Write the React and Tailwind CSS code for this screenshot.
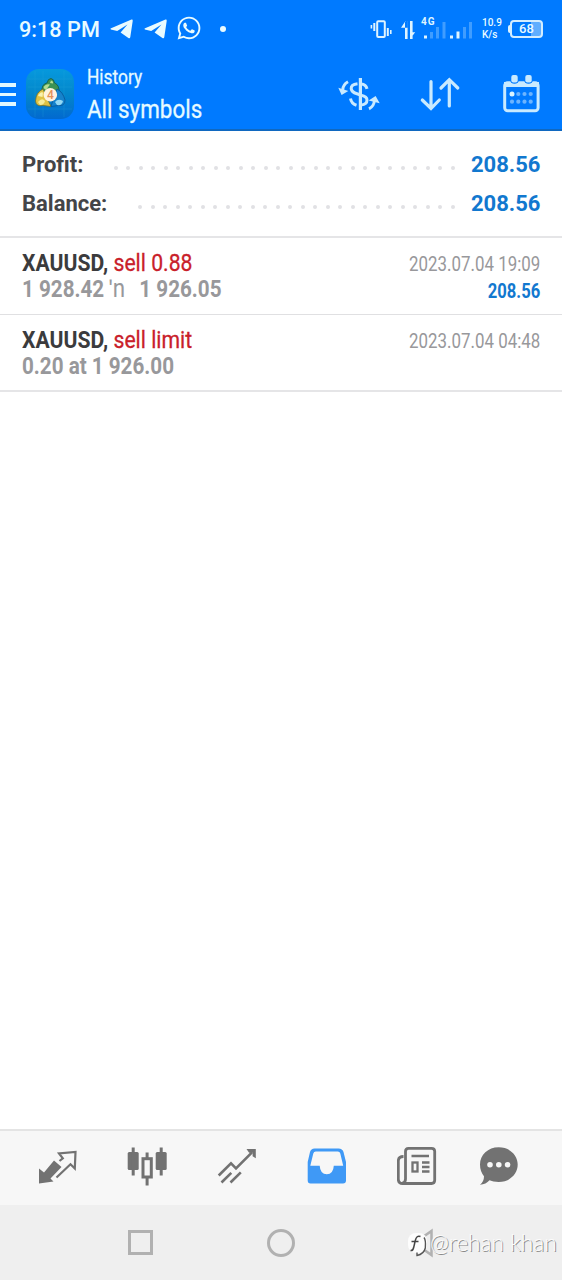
import { FaWhatsapp } from "react-icons/fa";

const deals = [
  {
    symbol: "XAUUSD,",
    side: "sell 0.88",
    detail: (
      <>
        1 928.42 <span className="inline-block w-[25px] -ml-px text-[26px] leading-[20px] font-normal">ʹn</span>
        <span className="pl-[5px]"> 1 926.05</span>
      </>
    ),
    date: "2023.07.04 19:09",
    profit: "208.56",
  },
  {
    symbol: "XAUUSD,",
    side: "sell limit",
    detail: "0.20 at 1 926.00",
    date: "2023.07.04 04:48",
  },
];

function Telegram() {
  return (
    <svg className="w-[23px] h-5" viewBox="0 0 23 20" fill="#e9fbff">
      <path d="M0.5 9.6 21.5 0.6 Q23 0.3 22.7 2 L20.3 18 Q20 19.8 18.4 18.9 L10.6 13.6 17.5 5.6 7.2 12 0.8 10.5Z" />
    </svg>
  );
}

function StatusBar() {
  return (
    <div className="h-[58px] flex items-center pl-[19px] pr-[19px] text-[#e9fbff]">
      <div className="w-[91px] text-[22px] font-medium whitespace-nowrap">
        <span className="inline-block origin-left scale-x-[0.985]">9:18 PM</span>
      </div>
      <Telegram />
      <div className="w-[11px]" />
      <Telegram />
      <FaWhatsapp className="ml-[9px] w-[26px] h-[26px] -mt-[2px]" />
      <div className="ml-[18px] w-[6px] h-[6px] rounded-full bg-[#e9fbff]" />

      <div className="ml-auto flex items-center">
        {/* vibrate, data arrows, signal */}
        <svg className="w-[104px] h-[26px]" viewBox="369 15 104 26" fill="#dff4ff">
          <rect x="377.2" y="20.2" width="7.6" height="15.8" rx="1" fill="none" stroke="#dff4ff" strokeWidth="2" />
          <path d="M373.3 22h2v8h-2zM370.6 24h1.6v3.5h-1.6zM386.8 27h2v8h-2zM390 29h1.6v4h-1.6z" />
          <path d="M405 20v18h2.6V20zM401 26.7 405.5 20h2v6.7zM410 20v18h2.6V20zM410 38l5.2-6.7h-5.2z" />
          <rect x="424" y="34.5" width="3" height="3" />
          <g opacity=".38" fill="#a9d8ff">
            <rect x="430" y="31" width="3" height="6.5" />
            <rect x="436" y="26" width="3" height="11.5" />
            <rect x="442.5" y="21" width="3" height="16.5" />
            <rect x="463" y="26" width="3" height="11.5" />
            <rect x="469" y="21" width="3" height="16.5" />
          </g>
          <rect x="450" y="34.5" width="3" height="3" />
          <rect x="456.5" y="30.5" width="3" height="7" />
          <text x="421" y="24.4" fontSize="10" fontWeight="700" textLength="13.5">4G</text>
        </svg>
        <div className="ml-[9px] w-[20px] text-[10px] leading-[12px] font-medium whitespace-nowrap">
          <div>10.9</div>
          <div>K/s</div>
        </div>
        <div className="ml-[6px] w-[2px] h-[8px] rounded-l bg-[#dff4ff]" />
        <div className="w-[33px] h-[18px] rounded-[4px] border-2 border-[#d3edff] bg-linear-to-r from-[#007aff] from-65% to-[#5faeff] to-65% flex items-center justify-center text-[13px] font-medium">
          68
        </div>
      </div>
    </div>
  );
}

function AppLogo() {
  return (
    <svg className="ml-[10px] w-[48px] h-[50px]" viewBox="0 0 48 50">
      <defs>
        <linearGradient id="tile" x1="0" y1="0" x2="0" y2="1">
          <stop offset="0" stopColor="#0699dd" />
          <stop offset=".5" stopColor="#0387cb" />
          <stop offset="1" stopColor="#0269cf" />
        </linearGradient>
      </defs>
      <rect width="48" height="50" rx="13" fill="url(#tile)" />
      <path d="M9 2V48M17 2V48M38 2V48M2 10H46M2 18H46M2 40H46" stroke="#2aa8dc" strokeWidth=".6" opacity=".4" />
      {/* green, gold and blue figures around the coin */}
      <path d="M16 24Q15 15 21 14Q22 9.5 25 9.5Q28 10 28.5 14Q34 16 33 25L25 20Z" fill="#3c9254" stroke="#135945" strokeWidth=".8" />
      <path d="M17.5 19Q19 14.5 24 15.5L20 21Z" fill="#b5dc90" />
      <path d="M25 11.5Q27.5 12 27 14.5L24 14Z" fill="#b5dc90" />
      <path d="M17 20Q10 23 9.5 32Q10 38 17 36.5L25 37.5L21 29Z" fill="#e0c243" stroke="#6c7131" strokeWidth=".8" />
      <path d="M12 27Q14 22.5 17 23.5L16.5 28Z" fill="#f9f1ae" />
      <path d="M12 33Q16 28 19 32Q18 36 14 36Z" fill="#f7eb97" />
      <path d="M31 20Q37 23 39 31Q39 37.5 32 36.5L25 37.5L28 28Z" fill="#1683cc" stroke="#075497" strokeWidth=".8" />
      <path d="M29 33Q32 29 37 32Q36 37 31 36Z" fill="#93d8f4" />
      <circle cx="24.3" cy="25.8" r="6.8" fill="#fff2de" />
      <text x="24.3" y="30" textAnchor="middle" fontSize="12" fontWeight="500" fill="#e29158">4</text>
    </svg>
  );
}

function Header() {
  return (
    <div className="h-[73px] border-b-2 border-[#1068c0] flex items-center pr-[22px] text-[#e6faff]">
      <div className="flex flex-col gap-[6px] w-4 pt-[2px]">
        <div className="h-[3.5px] bg-[#e2f8ff]" />
        <div className="h-[3.5px] bg-[#e2f8ff]" />
        <div className="h-[3.5px] bg-[#e2f8ff]" />
      </div>
      <AppLogo />
      <div className="ml-[13px] w-[160px] whitespace-nowrap">
        <div className="text-[21px] leading-[30px] origin-left scale-x-[0.825] [-webkit-text-stroke:0.3px]">History</div>
        <div className="text-[26.5px] leading-[34px] origin-left scale-x-[0.845] [-webkit-text-stroke:0.3px]">All symbols</div>
      </div>

      <div className="ml-auto flex items-center">
        <svg className="w-[44px] h-[40px]" viewBox="337 73 44 40" fill="none" stroke="#c9eaff" strokeWidth="3">
          <path d="M360.4 77V109" strokeWidth="3.2" />
          <path d="M357.5 82.7Q351 83.5 351.2 87.5Q351.5 91 357 92.8L361 94.2Q367 95.5 367 99Q367 103.5 361 104" />
          <path d="M361 83Q366 83.5 367 87.8" />
          <path d="M350.5 97.5Q351.3 102.5 356.5 104.2" />
          <path d="M348 80.8Q343 83.5 342.7 89" />
          <path d="M338.3 86.8L348.3 90L341.6 94Z" fill="#c9eaff" stroke="none" />
          <path d="M369 107.8Q374 105.5 374.5 99" />
          <path d="M368.7 99.5L375.6 95L379.7 102.3Z" fill="#c9eaff" stroke="none" />
        </svg>
        <svg className="ml-[38px] w-[42px] h-[40px]" viewBox="419 73 42 40" fill="none" stroke="#c9eaff" strokeWidth="3.2" strokeLinecap="round">
          <path d="M431 80.5V106M422.3 99L431 107.5L439.3 99M449.3 105V79M441 87L449.3 78.7L457.8 87" />
        </svg>
        <svg className="ml-[42px] w-[37px] h-[40px]" viewBox="503 73 37 40">
          <rect x="504.7" y="81.7" width="33.4" height="28" rx="3" fill="none" stroke="#c9eaff" strokeWidth="3" />
          <path d="M504 81h35v5h-35z" fill="#c9eaff" />
          <circle cx="514.5" cy="78" r="4.8" fill="#007aff" />
          <circle cx="528.5" cy="78" r="4.8" fill="#007aff" />
          <rect x="511.3" y="74" width="6.4" height="7.5" rx="2" fill="#c9eaff" />
          <rect x="525.3" y="74" width="6.4" height="7.5" rx="2" fill="#c9eaff" />
          <circle cx="512" cy="93" r="2.5" fill="#d9f4ff" />
          <g fill="#6cb4ff">
            <circle cx="518.3" cy="93" r="2.1" />
            <circle cx="524.5" cy="93" r="2.1" />
            <circle cx="530.7" cy="93" r="2.1" />
            <circle cx="512" cy="100.7" r="2.1" />
            <circle cx="518.3" cy="100.7" r="2.1" />
            <circle cx="524.5" cy="100.7" r="2.1" />
            <circle cx="530.7" cy="100.7" r="2.1" />
          </g>
        </svg>
      </div>
    </div>
  );
}

function SummaryRow({ label, value, dots, dotsClass }) {
  return (
    <div className="h-[39px] flex items-center justify-between text-[22px] font-bold">
      <div className="text-[#444548]">{label}</div>
      <div className="flex items-center">
        <div className={`flex justify-between pt-[7px] mr-[16px] ${dotsClass}`}>
          {Array.from({ length: dots }, (_, i) => (
            <div key={i} className="w-[4px] h-[4px] rounded-full bg-[#e1e1e4]" />
          ))}
        </div>
        <div className="w-[69px] text-right text-[#1278cf]">{value}</div>
      </div>
    </div>
  );
}

function Deal({ deal }) {
  return (
    <div className="flex justify-between px-[22px] pt-3 whitespace-nowrap">
      <div className="text-2xl leading-[26px] font-bold">
        <div className="leading-[26px] text-[#3b3b3d] origin-left scale-x-[0.882]">
          {deal.symbol} <span className="font-normal text-[#c9202a] [-webkit-text-stroke:0.3px]">{deal.side}</span>
        </div>
        <div className="h-[26px] leading-[26px] text-[#98989b] origin-left scale-x-[0.86]">{deal.detail}</div>
      </div>
      <div className="pt-[1px] text-xl leading-[26px] text-right">
        <div className="leading-[27px] text-[#98989b] origin-right scale-x-[0.845]">{deal.date}</div>
        {deal.profit && (
          <div className="leading-[27px] font-bold text-[#1278cf] origin-right scale-x-[0.83]">{deal.profit}</div>
        )}
      </div>
    </div>
  );
}

function TabBar() {
  return (
    <div className="h-[76px] border-t-2 border-[#e4e4e4] bg-[#f7f7f7] flex items-start gap-[49px] pt-[15px] pl-[37px]">
      <svg className="w-[41px] h-[42px]" viewBox="37 1146 41 42">
        <path d="M39 1168.5 44 1172.5 54 1160.5 61.5 1167 50.5 1178.5 53.5 1181.5 39 1183.5Z" fill="#727272" />
        <path d="M59.5 1161 62.8 1158.3 59 1153.5 75.5 1152 74.8 1168.5 70.5 1164.3 56.5 1177.5" fill="none" stroke="#727272" strokeWidth="2.2" />
      </svg>
      <svg className="w-[41px] h-[42px]" viewBox="127 1146 41 42" fill="#727272">
        <rect x="127.7" y="1152" width="11" height="18" rx="1.5" />
        <path d="M131.7 1147.5h3v28h-3zM159.7 1147.5h3v28h-3zM145.6 1152.5h3v6h-3zM145.6 1177h3v8.5h-3z" />
        <rect x="155.7" y="1152" width="11" height="18" rx="1.5" />
        <rect x="143" y="1158.7" width="8.3" height="18.3" fill="none" stroke="#727272" strokeWidth="3" />
      </svg>
      <svg className="w-[41px] h-[42px]" viewBox="217 1146 41 42" fill="none" stroke="#727272" strokeWidth="2.6">
        <path d="M218.7 1175.5 231 1163.3 236 1168.3 252 1152.3M221.5 1182.5 231.3 1172.8M230.5 1182.5 240.8 1172.3" />
        <path d="M246.5 1149h9.3v9.3l-3.2 -2v-3.5h-3.5z" fill="#727272" stroke="none" />
      </svg>
      <svg className="w-[40px] h-[42px]" viewBox="307 1146 40 42">
        <path
          fillRule="evenodd"
          fill="#3f99f6"
          d="M314.5 1148.5H338.5Q342.5 1148.5 343.5 1152L346 1162V1180.5Q346 1183.5 343 1183.5H310.5Q307.7 1183.5 307.7 1180.5V1162L310 1152Q311 1148.5 314.5 1148.5ZM315.8 1151.5Q313.8 1151.5 313.3 1153.5L310.3 1165.8H319.7Q320.2 1174.3 326.8 1174.3Q333.3 1174.3 333.8 1165.8H343.2L340.3 1153.5Q339.8 1151.5 337.8 1151.5Z"
        />
      </svg>
      <svg className="ml-px w-[41px] h-[42px]" viewBox="397 1146 41 42" fill="none" stroke="#727272" strokeWidth="2.8">
        <path d="M403.5 1156.5Q398.3 1156.5 398.3 1161V1179Q398.3 1183.5 402.5 1183.5H431.5Q434.7 1183.5 434.7 1180.3V1151.3Q434.7 1148.4 431.5 1148.4H408.5Q405.5 1148.4 405.5 1151.5V1179Q405.5 1183 402 1183.5" />
        <path d="M411.5 1156H429M422 1162.5H429.5M422 1167H429.5M422 1171.5H429.5" strokeWidth="2.3" />
        <rect x="412.5" y="1162.5" width="5" height="9" strokeWidth="2.3" />
      </svg>
      <svg className="-ml-[8px] w-[40px] h-[42px]" viewBox="479 1146 40 42">
        <path d="M498.7 1147.3C509.5 1147.3 517.7 1154.8 517.7 1164.6S509.5 1182 498.7 1182Q493 1182 489.5 1180.3Q486 1184.5 480 1184.8Q484 1181.5 484 1176.2Q480 1171.5 480 1164.6C480 1154.8 488 1147.3 498.7 1147.3Z" fill="#727272" />
        <circle cx="490" cy="1164.7" r="2.8" fill="#f7f7f7" />
        <circle cx="498.8" cy="1164.7" r="2.8" fill="#f7f7f7" />
        <circle cx="507.6" cy="1164.7" r="2.8" fill="#f7f7f7" />
      </svg>
    </div>
  );
}

function SystemNav() {
  return (
    <div className="relative h-[75px] bg-[#efefef] flex items-center pl-[128px]">
      <div className="w-[25px] h-[25px] border-3 border-[#b1b1b1]" />
      <div className="ml-[114px] w-[28px] h-[28px] rounded-full border-3 border-[#b1b1b1]" />
      <svg className="ml-[118px] w-[22px] h-[30px]" viewBox="0 0 22 30">
        <path d="M18.5 3V27L1.5 15Z" fill="none" stroke="#b1b1b1" strokeWidth="2.5" />
      </svg>

      {/* author mark */}
      <div className="absolute left-[407px] top-[26px] flex items-center">
        <svg className="w-[23px] h-[26px]" viewBox="0 0 23 26" fill="none">
          <rect x="1" y="2" width="19" height="20" rx="8" fill="#fdfdfd" />
          <path d="M13.5 5.5Q9.5 4 8.3 9.5L6.8 16Q6 20 3.5 19.5M4.5 10.5H11.5" stroke="#444" strokeWidth="1.5" />
          <path d="M17 6.5Q19 9 18.3 17Q17 23 10 24.5V21.5" stroke="#555" strokeWidth="1.4" />
        </svg>
        <div
          className="w-[130px] -mt-[4px] whitespace-nowrap text-[23px] leading-[26px] font-light text-[#fcfcfc] [text-shadow:1px_0.5px_0_#8a8a8a]"
          style={{ fontFamily: "Lato, sans-serif" }}
        >
          <span className="inline-block origin-left scale-x-[0.985]">@rehan khan</span>
        </div>
      </div>
    </div>
  );
}

export default function App() {
  return (
    <div className="w-[562px] h-[1280px] overflow-hidden flex flex-col bg-white font-[Roboto,sans-serif]">
      <div className="bg-[#007aff]">
        <StatusBar />
        <Header />
      </div>

      <div className="h-[107px] px-[22px] pt-[14px] border-b-2 border-[#e5e5e7]">
        <SummaryRow label="Profit:" value="208.56" dots={28} dotsClass="w-[341px]" />
        <SummaryRow label="Balance:" value="208.56" dots={26} dotsClass="w-[317px]" />
      </div>

      <div className="h-[77px] border-b border-[#e0e0e2]">
        <Deal deal={deals[0]} />
      </div>
      <div className="h-[77px] border-b-2 border-[#e5e5e7]">
        <Deal deal={deals[1]} />
      </div>

      <div className="flex-1" />
      <TabBar />
      <SystemNav />
    </div>
  );
}
